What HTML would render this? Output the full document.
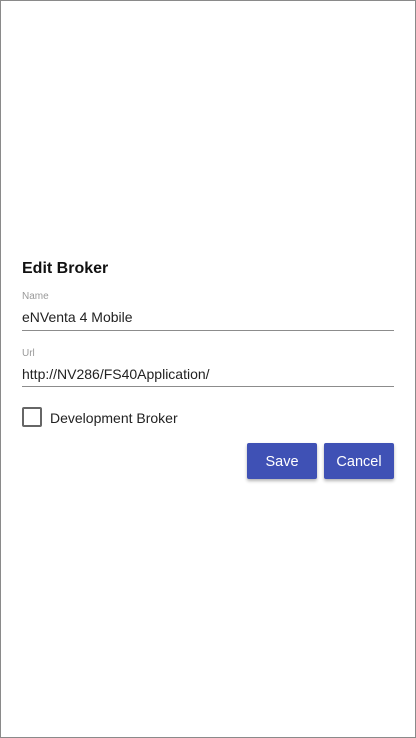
<!DOCTYPE html>
<html><head><style>
body{margin:0;width:416px;height:738px;font-family:"Liberation Sans",Arial,sans-serif;}
.frame{position:absolute;left:0;top:0;width:414px;height:736px;border:1px solid #8a8a8a;background:#fff}
.a{position:absolute;white-space:nowrap}
.line{position:absolute;left:22px;width:372px;height:1px;background:#8c8c8c}
.btn{position:absolute;top:443px;width:70px;height:36px;background:#3f51b5;color:#fff;font-size:14.5px;line-height:38px;text-align:center;border-radius:2px;box-shadow:0 2px 3px rgba(0,0,0,.3)}
</style></head><body>
<div class="frame"></div>
<div class="a" style="left:22px;top:260px;font-size:16px;font-weight:bold;color:#111">Edit Broker</div>
<div class="a" style="left:22px;top:291px;font-size:10px;color:#999">Name</div>
<div class="a" style="left:22px;top:309px;font-size:14px;color:#222">eNVenta 4 Mobile</div>
<div class="line" style="top:330px"></div>
<div class="a" style="left:22px;top:348px;font-size:10px;color:#999">Url</div>
<div class="a" style="left:22px;top:366px;font-size:14px;color:#222">http://NV286/FS40Application/</div>
<div class="line" style="top:386px"></div>
<div class="a" style="left:22px;top:407px;width:16px;height:16px;border:2px solid #666;border-radius:2px"></div>
<div class="a" style="left:50px;top:410px;font-size:14px;color:#222">Development Broker</div>
<div class="btn" style="left:247px">Save</div>
<div class="btn" style="left:324px">Cancel</div>
</body></html>
